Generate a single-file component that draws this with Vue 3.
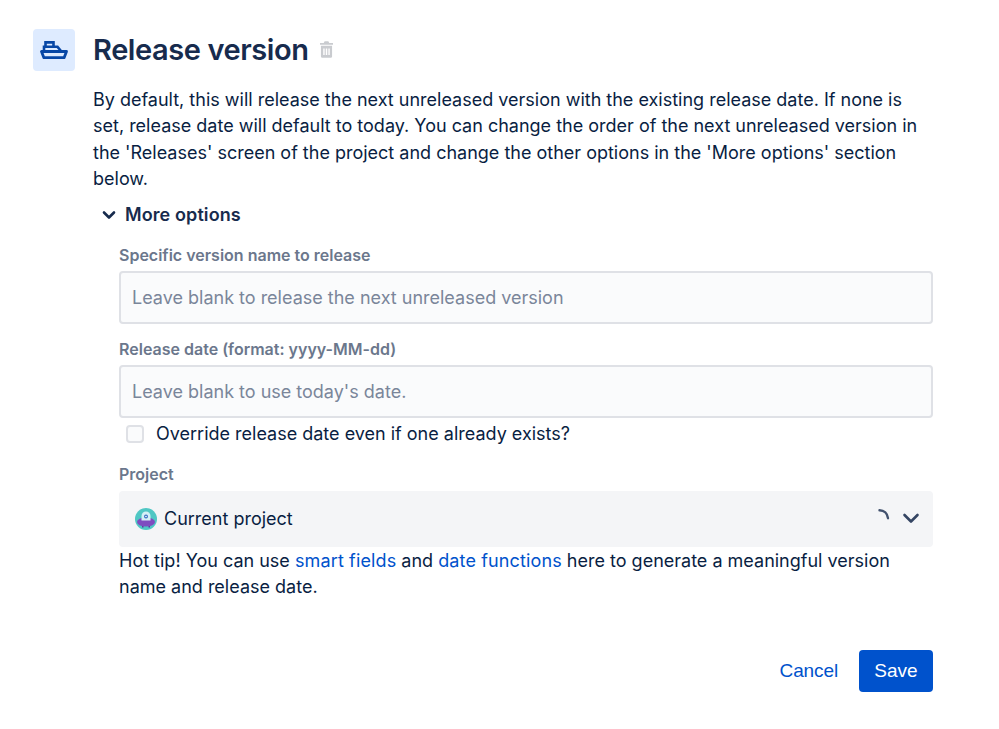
<script setup>
</script>

<template>
  <div class="page">
    <div class="head">
      <div class="tile">
        <svg class="ship" width="28" height="18" viewBox="0 0 28 18" fill="none">
          <path d="M5.500 5V1.400h8V5" stroke="#0747a6" stroke-width="2.600"/>
          <path d="M4 10V5.800h13.500l3.500 4.200" stroke="#0747a6" stroke-width="2.600"/>
          <path d="M1.500 10.500h25l-2.400 6.200H3.900z" stroke="#0747a6" stroke-width="2.800" stroke-linejoin="round"/>
        </svg>
      </div>
      <h1 class="title">Release version</h1>
      <svg class="trash" width="13" height="17" viewBox="0 0 14 18">
        <path d="M5 0h4l1 2h4v2H0V2h4z" fill="#c9cbcf"/>
        <path fill-rule="evenodd" d="M1 5h12v11.500a1.500 1.500 0 0 1-1.500 1.500h-9A1.500 1.500 0 0 1 1 16.500zM3.500 8v7h1.500V8zm2.700 0v7h1.600V8zM9 8v7h1.500V8z" fill="#c9cbcf"/>
      </svg>
    </div>

    <p class="intro">By default, this will release the next unreleased version with the existing release date. If none is set, release date will default to today. You can change the order of the next unreleased version in the 'Releases' screen of the project and change the other options in the 'More options' section below.</p>

    <div class="toggle">
      <svg width="14" height="10" viewBox="0 0 14 10" fill="none">
        <path d="M2 2.500 7 7.500l5-5" stroke="#172b4d" stroke-width="2.600" stroke-linecap="round" stroke-linejoin="round"/>
      </svg>
      <span>More options</span>
    </div>

    <div class="form">
      <label class="label first">Specific version name to release</label>
      <input class="field" placeholder="Leave blank to release the next unreleased version" />

      <label class="label second">Release date (format: yyyy-MM-dd)</label>
      <input class="field" placeholder="Leave blank to use today's date." />

      <div class="check">
        <span class="box"></span>
        <span>Override release date even if one already exists?</span>
      </div>

      <label class="label third">Project</label>
      <div class="select">
        <svg class="avatar" width="22" height="22" viewBox="0 0 22 22">
          <circle cx="11" cy="11" r="11" fill="#4fc7c4"/>
          <path d="M7 17h1.500v2.500H7zM13.500 17H15v2.500h-1.500z" fill="#5b2f9e"/>
          <ellipse cx="11" cy="14" rx="9" ry="4.500" fill="#7e4cc0"/>
          <path d="M6.500 12.500V8a4.500 4.500 0 0 1 9 0v4.500z" fill="#d4eff6"/>
          <circle cx="11" cy="8.500" r="2" fill="#3a6fc4"/>
          <circle cx="11" cy="8.500" r="0.800" fill="#fff"/>
        </svg>
        <span class="value">Current project</span>
        <svg class="spinner" width="16" height="16" viewBox="0 0 16 16" fill="none">
          <path d="M2.500 2.200c4.500 0 8 3.200 8.500 8" stroke="#42526e" stroke-width="2.400" stroke-linecap="round"/>
        </svg>
        <svg class="caret" width="18" height="11" viewBox="0 0 18 11" fill="none">
          <path d="M2.500 2l6.500 6.500L15.500 2" stroke="#344563" stroke-width="2.600" stroke-linecap="round" stroke-linejoin="round"/>
        </svg>
      </div>

      <p class="tip">Hot tip! You can use <a>smart fields</a> and <a>date functions</a> here to generate a meaningful version name and release date.</p>

      <div class="actions">
        <button class="cancel">Cancel</button>
        <button class="save">Save</button>
      </div>
    </div>
  </div>
</template>

<style>
html, body { background: #fff; }
</style>

<style scoped>
.page {
  width: 999px;
  height: 729px;
  box-sizing: border-box;
  padding: 29px 66px 0 33px;
  font-family: Inter, "Liberation Sans", sans-serif;
  font-size: 18px;
  line-height: 26.4px;
  color: #091e42;
  overflow: hidden;
}
.head { display: flex; align-items: center; height: 43px; }
.tile {
  width: 42px;
  height: 42px;
  border-radius: 4px;
  background: #deebff;
  display: flex;
  align-items: center;
  justify-content: center;
  flex: none;
  margin-bottom: 1px;
}
.title {
  margin: -2px 0 0 18px;
  font-size: 29px;
  line-height: 43px;
  font-weight: 600;
  letter-spacing: -0.42px;
  color: #172b4d;
}
.trash { margin: -3px 0 0 11px; }
.intro { margin: 15px 0 0 60px; }
.toggle {
  display: flex;
  align-items: center;
  gap: 9px;
  margin: 9px 0 0 69px;
  font-weight: 600;
  color: #172b4d;
  letter-spacing: 0.1px;
}
.form { margin-left: 86px; display: flex; flex-direction: column; }
.label { font-size: 16px; line-height: 20px; font-weight: 600; color: #6b778c; }
.label.first { margin-top: 17px; }
.label.second { margin-top: 15px; }
.label.third { margin-top: 17px; }
.field {
  box-sizing: border-box;
  height: 53px;
  width: 100%;
  margin-top: 6px;
  padding: 0 11px;
  border: 2.500px solid #dfe1e6;
  border-radius: 4px;
  background: #fafbfc;
  font: inherit;
  color: #091e42;
  outline: none;
}
.field::placeholder { color: #7a869a; opacity: 1; }
.check { display: flex; align-items: center; gap: 12px; margin: 3px 0 0 7px; height: 26px; }
.box {
  box-sizing: border-box;
  width: 18px;
  height: 18px;
  border: 2px solid #dfe1e6;
  border-radius: 4px;
  background: #fafbfc;
}
.select {
  display: flex;
  align-items: center;
  height: 56px;
  margin-top: 7px;
  padding: 0 13px 0 16px;
  box-sizing: border-box;
  border-radius: 4px;
  background: #f4f5f7;
}
.value { margin-left: 7px; flex: 1; }
.spinner { margin: 0 9px 6px 0; }
.caret { margin-bottom: 2px; }
.tip { margin: 0; padding-top: 1px; }
.tip a { color: #0052cc; letter-spacing: 0.13px; }
.actions { display: flex; justify-content: flex-end; align-items: center; gap: 21px; margin-top: 49px; }
button {
  font-family: "Liberation Sans", Arial, sans-serif;
  font-size: 19px;
  border: 0;
  padding: 0;
  cursor: pointer;
}
.cancel { background: none; color: #0052cc; letter-spacing: -0.12px; }
.save {
  width: 74px;
  height: 42px;
  border-radius: 4px;
  background: #0052cc;
  color: #fff;
}
</style>
